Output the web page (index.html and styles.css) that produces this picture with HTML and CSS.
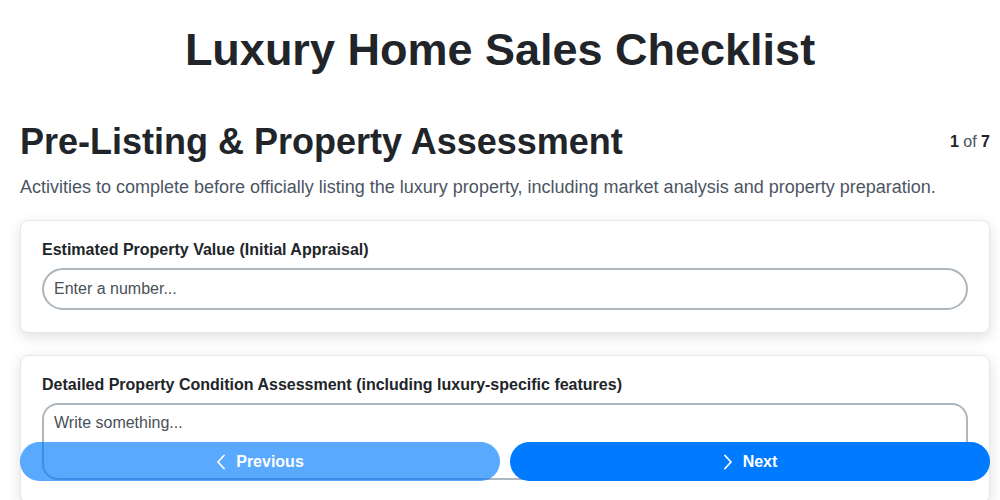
FILE: index.html
```html
<!DOCTYPE html>
<html lang="en">
<head>
<meta charset="utf-8">
<title>Luxury Home Sales Checklist</title>
<link rel="stylesheet" href="styles.css">
</head>
<body>
<h1 class="title">Luxury Home Sales Checklist</h1>
<main class="page">
  <div class="section-head">
    <h2 class="section-title">Pre-Listing &amp; Property Assessment</h2>
    <div class="counter"><b>1</b> of <b>7</b></div>
  </div>
  <p class="section-desc">Activities to complete before officially listing the luxury property, including market analysis and property preparation.</p>

  <div class="card">
    <label class="field-label">Estimated Property Value (Initial Appraisal)</label>
    <input class="field-input" type="text" placeholder="Enter a number...">
  </div>

  <div class="card">
    <label class="field-label">Detailed Property Condition Assessment (including luxury-specific features)</label>
    <textarea class="field-textarea" placeholder="Write something..."></textarea>
  </div>
</main>

<nav class="pager">
  <button class="btn btn-prev" type="button">
    <svg class="chev" width="10" height="16" viewBox="0 0 10 16"><path d="M8 1.5 L2 8 L8 14.5" fill="none" stroke="currentColor" stroke-width="1.8" stroke-linecap="round" stroke-linejoin="round"/></svg>
    <span>Previous</span>
  </button>
  <button class="btn btn-next" type="button">
    <svg class="chev" width="10" height="16" viewBox="0 0 10 16"><path d="M2 1.5 L8 8 L2 14.5" fill="none" stroke="currentColor" stroke-width="1.8" stroke-linecap="round" stroke-linejoin="round"/></svg>
    <span>Next</span>
  </button>
</nav>
</body>
</html>
```
FILE: styles.css
```css
* { box-sizing: border-box; }
html, body { margin: 0; padding: 0; background: #ffffff; }
body {
  font-family: "Liberation Sans", Arial, sans-serif;
  color: #212529;
  overflow: hidden;
}
.title {
  margin: 0;
  padding-top: 24px;
  text-align: center;
  font-size: 45px;
  line-height: 52px;
  font-weight: 700;
  color: #212529;
}
.page {
  padding: 0 10px 0 20px;
}
.section-head {
  display: flex;
  align-items: center;
  justify-content: space-between;
  margin-top: 44px;
}
.section-title {
  margin: 0;
  font-size: 36px;
  line-height: 44px;
  font-weight: 700;
  color: #212529;
}
.counter {
  font-size: 16px;
  color: #495057;
}
.counter b { color: #212529; }
.section-desc {
  margin: 10px 0 20px;
  font-size: 18px;
  line-height: 26px;
  color: #4b5563;
}
.card {
  background: #fff;
  border: 1px solid #e5e7eb;
  border-radius: 8px;
  box-shadow: 0 4px 14px rgba(0,0,0,0.13);
  padding: 18px 21px 22px;
  margin-bottom: 22px;
}
.field-label {
  display: block;
  font-size: 16px;
  line-height: 22px;
  font-weight: 700;
  color: #212529;
  margin-bottom: 7px;
}
.field-input,
.field-textarea {
  display: block;
  width: 100%;
  font-family: "Liberation Sans", Arial, sans-serif;
  font-size: 16px;
  color: #212529;
  background: #fff;
  border: 2px solid #adb5bd;
  outline: none;
}
.field-input {
  height: 42px;
  padding: 0 10px;
  border-radius: 9999px;
}
.field-textarea {
  height: 77px;
  padding: 7px 10px;
  line-height: 22px;
  border-radius: 16px;
  resize: none;
}
.field-input::placeholder,
.field-textarea::placeholder { color: #495057; opacity: 1; }

.pager {
  position: fixed;
  left: 20px;
  right: 10px;
  bottom: 19px;
  display: flex;
  gap: 10px;
}
.btn {
  flex: 1;
  height: 39px;
  border: none;
  border-radius: 9999px;
  background: #007bff;
  color: #fff;
  font-family: "Liberation Sans", Arial, sans-serif;
  font-size: 16px;
  font-weight: 700;
  display: flex;
  align-items: center;
  justify-content: center;
  gap: 10px;
  cursor: pointer;
}
.btn-prev { opacity: 0.65; }
.chev { display: block; }
```
